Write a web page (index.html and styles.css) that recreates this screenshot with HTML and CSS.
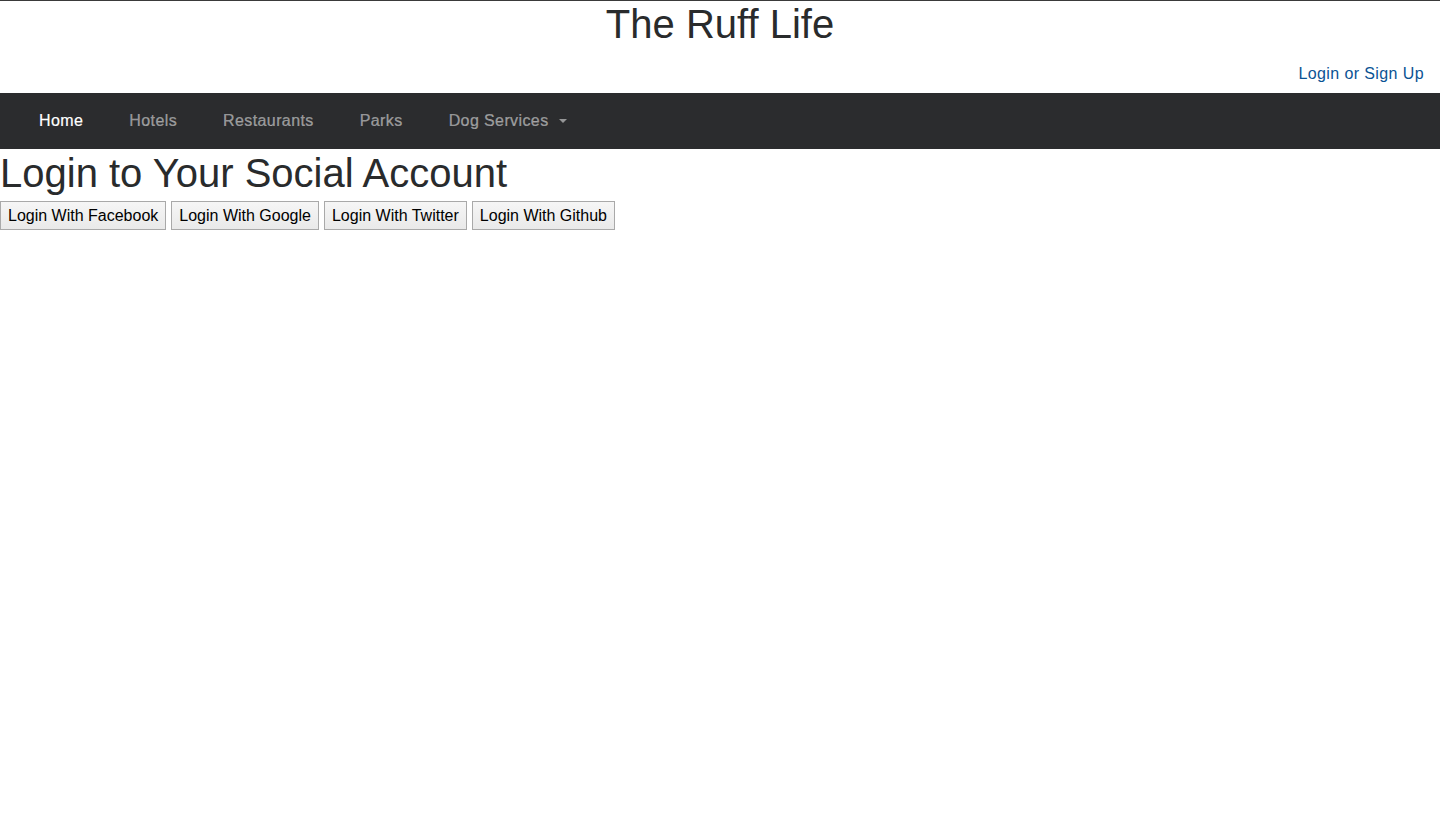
FILE: index.html
```html
<!DOCTYPE html>
<html>
<head>
<meta charset="utf-8">
<link rel="stylesheet" href="styles.css">
</head>
<body>
<header class="site-header">
  <h1 class="site-title">The Ruff Life</h1>
  <div class="auth-row"><a class="auth-link" href="#">Login or Sign Up</a></div>
</header>
<nav class="navbar">
  <a class="nav-link active" href="#">Home</a>
  <a class="nav-link" href="#">Hotels</a>
  <a class="nav-link" href="#">Restaurants</a>
  <a class="nav-link" href="#">Parks</a>
  <a class="nav-link dropdown" href="#">Dog Services<span class="caret"></span></a>
</nav>
<main>
  <h2 class="page-title">Login to Your Social Account</h2>
  <div class="buttons">
    <button class="btn">Login With Facebook</button>
    <button class="btn">Login With Google</button>
    <button class="btn">Login With Twitter</button>
    <button class="btn">Login With Github</button>
  </div>
</main>
</body>
</html>
```
FILE: styles.css
```css
html, body {
  margin: 0;
  padding: 0;
  background: #fff;
}
body {
  font-family: "Liberation Sans", Arial, sans-serif;
  color: #292b2c;
  border-top: 1px solid #3a3a3a;
}
.site-header {
  height: 92px;
  display: flex;
  flex-direction: column;
}
.site-title {
  margin: 0;
  text-align: center;
  font-size: 40px;
  font-weight: normal;
  line-height: 46px;
  color: #292b2c;
}
.auth-row {
  display: flex;
  justify-content: flex-end;
  padding: 17px 16px 0 0;
}
.auth-link {
  color: #0b5394;
  text-decoration: none;
  font-size: 16px;
  line-height: 20px;
  letter-spacing: 0.4px;
}
.navbar {
  background: #2b2c2e;
  height: 56px;
  display: flex;
  align-items: center;
  padding: 0 16px;
}
.nav-link {
  color: rgba(255,255,255,0.5);
  text-decoration: none;
  font-size: 16px;
  letter-spacing: 0.4px;
  padding: 0 23px;
  display: flex;
  align-items: center;
  -webkit-text-stroke: 0.2px currentColor;
}
.nav-link.active {
  color: #fff;
}
.caret {
  display: inline-block;
  width: 0;
  height: 0;
  margin-left: 10px;
  border-left: 4px solid transparent;
  border-right: 4px solid transparent;
  border-top: 4px solid rgba(255,255,255,0.5);
}
.page-title {
  margin: 0;
  font-size: 40px;
  font-weight: normal;
  line-height: 48px;
  color: #292b2c;
}
.buttons {
  display: flex;
  gap: 5px;
  margin-top: 4px;
}
.btn {
  font-family: "Liberation Sans", Arial, sans-serif;
  font-size: 16px;
  color: #000;
  height: 29px;
  padding: 0 7px;
  border: 1px solid #a9a9a9;
  background: linear-gradient(#f6f6f6, #e9e9e9);
  border-radius: 0;
}
```
